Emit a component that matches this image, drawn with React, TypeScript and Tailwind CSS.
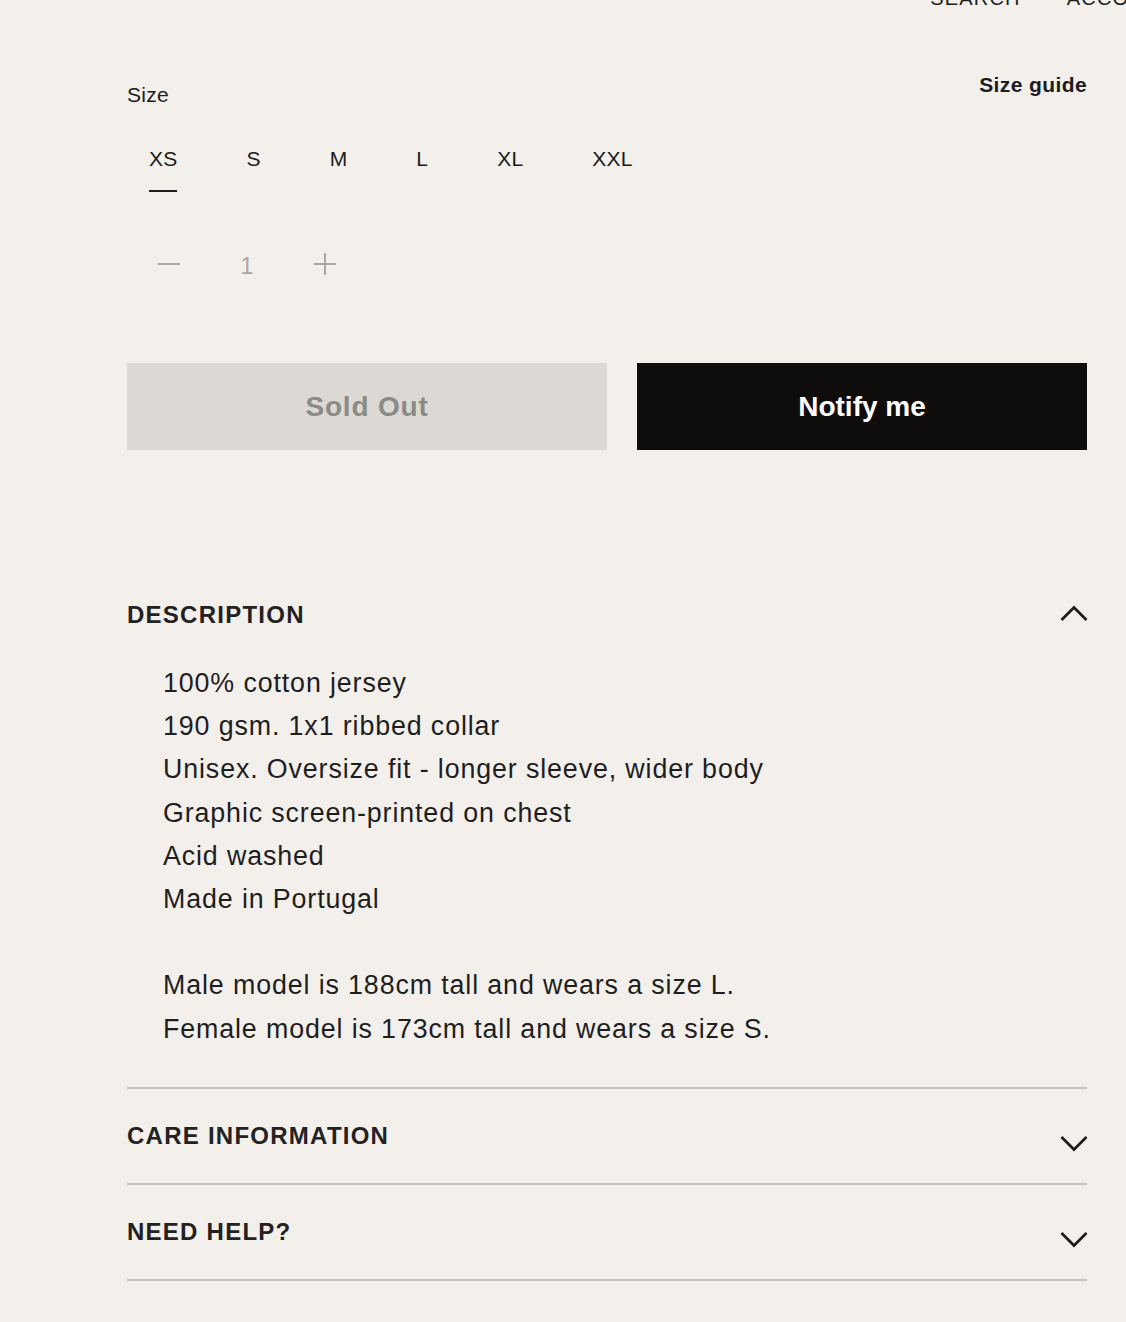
import { useState } from 'react';

const SIZES = ['XS', 'S', 'M', 'L', 'XL', 'XXL'];

const DESCRIPTION_LINES = [
  '100% cotton jersey',
  '190 gsm. 1x1 ribbed collar',
  'Unisex. Oversize fit - longer sleeve, wider body',
  'Graphic screen-printed on chest',
  'Acid washed',
  'Made in Portugal',
  '',
  'Male model is 188cm tall and wears a size L.',
  'Female model is 173cm tall and wears a size S.',
];

function Chevron({ up }: { up?: boolean }) {
  return (
    <svg width="28" height="18" viewBox="0 0 28 18" fill="none" className="shrink-0">
      <polyline
        points={up ? '1.5,16 14,3.5 26.5,16' : '1.5,2 14,14.5 26.5,2'}
        stroke="#1c1c1c"
        strokeWidth="2.7"
      />
    </svg>
  );
}

function AccordionRow({ title, open }: { title: string; open?: boolean }) {
  return (
    <div className="flex h-[94px] items-center justify-between">
      <span className="text-[24px] font-bold uppercase tracking-[1.25px] text-[#222]">{title}</span>
      <span className={open ? '-mr-[1px] -mt-[4px]' : '-mr-[1px] mt-[16px]'}>
        <Chevron up={open} />
      </span>
    </div>
  );
}

export default function App() {
  const [size, setSize] = useState('XS');
  const [qty] = useState(1);

  return (
    <div className="min-h-[1322px] overflow-hidden bg-[#f3efeb] font-['Liberation_Sans',Arial,sans-serif] text-[#1c1c1c]">
      {/* Top nav, mostly scrolled out of view */}
      <header className="-mr-[48px] -mt-[12px] flex h-[20px] items-center justify-end gap-[46px] text-[20px] leading-[20px] tracking-[1.2px] whitespace-nowrap">
        <span>SEARCH</span>
        <span>ACCOUNT</span>
      </header>

      <div className="pl-[127px] pr-[39px]">
        {/* Size label + guide */}
        <div className="mt-[66px] flex items-start justify-between">
          <span className="mt-[10px] text-[21px] leading-[21px] tracking-[0.3px]">Size</span>
          <button type="button" className="text-[21px] font-bold leading-[21px] tracking-[0.4px]">
            Size guide
          </button>
        </div>

        {/* Size options */}
        <div className="mt-[43px] flex items-start gap-[25px]">
          {SIZES.map((s) => (
            <button
              key={s}
              type="button"
              onClick={() => setSize(s)}
              className="px-[22px] text-[21px] leading-[21px] tracking-[0.2px]"
            >
              <span className={s === size ? 'block border-b-2 border-[#1c1c1c] pb-[21px]' : 'block'}>{s}</span>
            </button>
          ))}
        </div>

        {/* Quantity */}
        <div className="mt-[52px] flex h-[40px] items-center pl-[3px] text-[#a9a6a1]">
          <button type="button" className="flex w-[78px] items-center justify-center">
            <span className="block h-[2px] w-[22px] bg-[#aaa6a1]" />
          </button>
          <span className="flex w-[78px] items-center justify-center pt-[4px] text-[23px] leading-[23px]">{qty}</span>
          <button type="button" className="flex w-[78px] items-center justify-center">
            <svg width="22" height="22" viewBox="0 0 22 22">
              <line x1="0" y1="11" x2="22" y2="11" stroke="#aaa6a1" strokeWidth="2" />
              <line x1="11" y1="0" x2="11" y2="22" stroke="#aaa6a1" strokeWidth="2" />
            </svg>
          </button>
        </div>

        {/* Actions */}
        <div className="mt-[79px] flex gap-[30px]">
          <button
            type="button"
            disabled
            className="flex h-[87px] w-[480px] items-center justify-center bg-[#dcd9d4] text-[28px] font-bold tracking-[0.8px] text-[#8b8a86]"
          >
            Sold Out
          </button>
          <button
            type="button"
            className="flex h-[87px] flex-1 items-center justify-center bg-[#0e0d0b] text-[28px] font-bold text-white"
          >
            Notify me
          </button>
        </div>

        {/* Accordions */}
        <div className="mt-[118px]">
          <AccordionRow title="Description" open />
          <div className="border-b-2 border-[#c4c0bb] pb-[36px] pl-[36px] text-[26.8px] leading-[43.2px] tracking-[0.88px] text-[#1e1e1e]">
            {DESCRIPTION_LINES.map((line, i) => (
              <div key={i} className="h-[43.2px]">
                {line}
              </div>
            ))}
          </div>
          <div className="border-b-2 border-[#c4c0bb]">
            <AccordionRow title="Care information" />
          </div>
          <div className="border-b-2 border-[#c4c0bb]">
            <AccordionRow title="Need help?" />
          </div>
        </div>
      </div>
    </div>
  );
}
